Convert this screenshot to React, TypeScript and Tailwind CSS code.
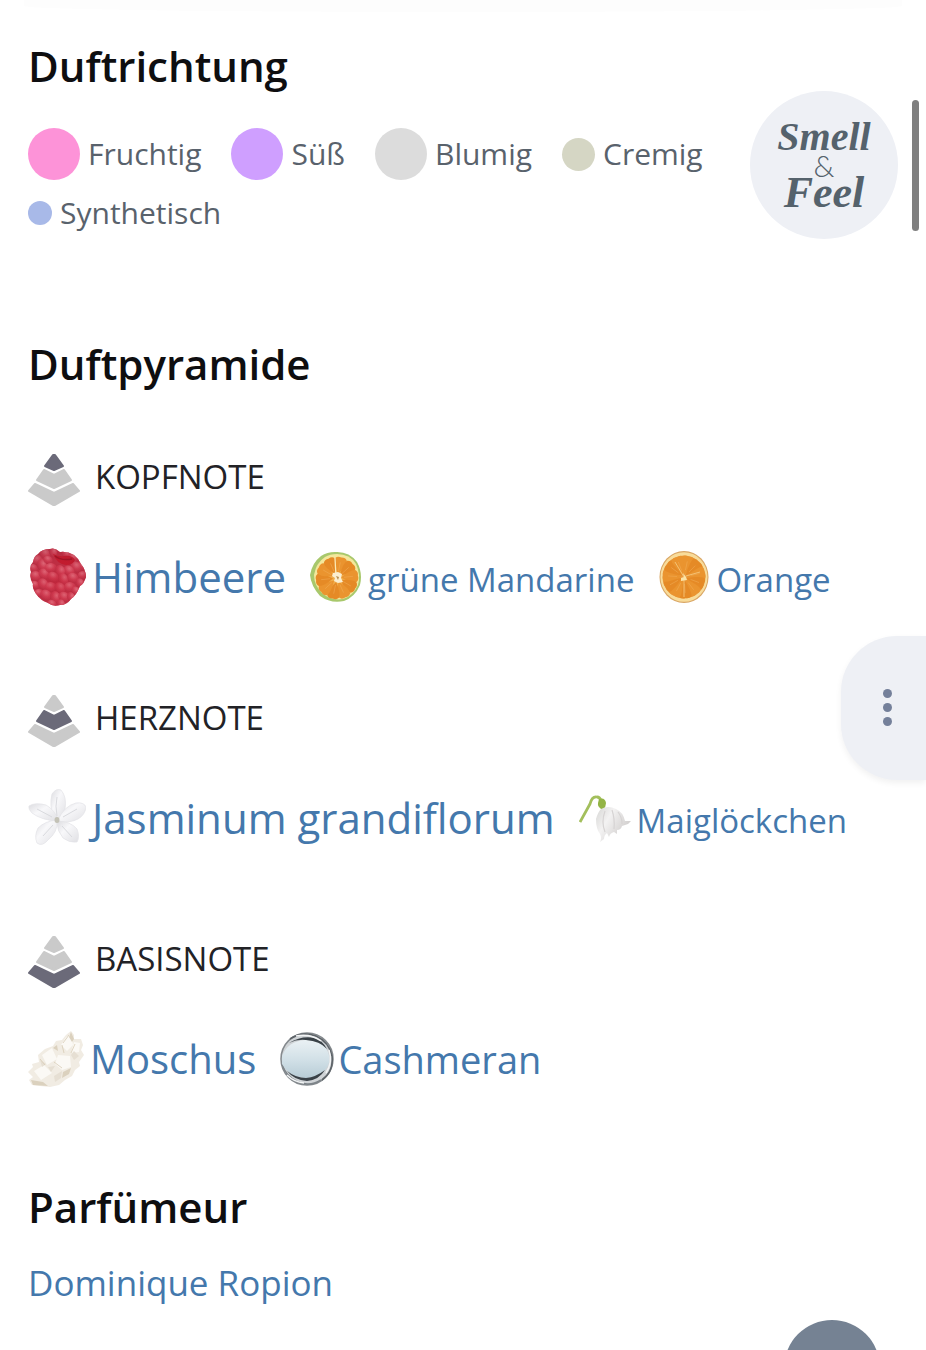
import { useId, type ReactNode } from "react";

const drupelets = [
  [10, 12, 6], [17, 6, 6], [25, 4, 5], [5, 20, 5], [14, 17, 6], [20, 12, 5], [38, 6, 5], [46, 10, 6],
  [53, 18, 5], [8, 28, 6], [16, 26, 6], [23, 20, 6], [48, 19, 6], [55, 27, 5], [41, 23, 6], [32, 23, 6],
  [25, 29, 6], [35, 31, 6], [45, 30, 6], [52, 35, 5], [7, 37, 5], [15, 36, 6], [23, 39, 6], [32, 40, 6],
  [42, 39, 6], [48, 43, 5], [11, 45, 5], [18, 47, 6], [27, 49, 6], [36, 49, 6], [43, 49, 5], [24, 56, 5], [33, 56, 5],
];

function Raspberry() {
  const id = useId();
  return (
    <svg viewBox="0 0 58 58" className="size-[58px] shrink-0" aria-hidden="true">
      <defs>
        <clipPath id={`${id}c`}>
          <path d="M10 6Q14 1 22 1Q27-1 32 4Q39 3 46 7Q51 11 53 16Q58 22 58 29Q56 36 52 38Q48 48 43 51Q39 57 32 57Q25 59 20 55Q12 52 9 47Q4 41 5 36Q1 30 3 24Q1 18 5 14Q6 8 10 6Z" />
        </clipPath>
        <radialGradient id={`${id}g`} cx="0.4" cy="0.3" r="0.75">
          <stop offset="0" stopColor="#ec8391" />
          <stop offset="0.5" stopColor="#d4445a" />
          <stop offset="1" stopColor="#b32b40" />
        </radialGradient>
        <radialGradient id={`${id}h`} cx="0.5" cy="0.6" r="0.6">
          <stop offset="0" stopColor="#c5162b" stopOpacity="0.35" />
          <stop offset="0.6" stopColor="#c5162b" stopOpacity="0.1" />
          <stop offset="1" stopColor="#8f1c30" stopOpacity="0.25" />
        </radialGradient>
      </defs>
      <g clipPath={`url(#${id}c)`}>
        <rect width="58" height="58" fill="#bd3146" />
        {drupelets.map(([x, y, r], i) => (
          <ellipse
            key={i}
            cx={x}
            cy={y}
            rx={r}
            ry={r - 1}
            transform={`rotate(${(i * 37) % 80} ${x} ${y})`}
            fill={`url(#${id}g)`}
            opacity={0.8}
          />
        ))}
        <path d="M25 6Q31 9 36 8Q44 7 47 12Q45 17 38 17Q29 16 25 6Z" fill="#c21c2f" />
        <path d="M27 8Q33 13 44 11" fill="none" stroke="#9c1425" strokeWidth="1.5" />
        <rect width="58" height="58" fill={`url(#${id}h)`} />
      </g>
    </svg>
  );
}

function Citrus({ green = false }: { green?: boolean }) {
  const cx = green ? 27 : 26;
  const cy = green ? 27 : 26;
  const n = green ? 10 : 11;
  return (
    <svg viewBox="0 0 52 52" className="size-[52px] shrink-0" aria-hidden="true">
      {green ? (
        <>
          <path d="M25 1Q39 0 47 11Q53 22 50 34Q45 46 34 50Q21 53 10 45Q1 35 0 24Q2 12 11 5Q17 1 25 1Z" fill="#a8c86c" />
          <path d="M27 3Q40 3 46 13Q51 24 48 34Q43 45 33 48Q21 50 12 42Q4 34 4 24Q6 12 15 6Q20 3 27 3Z" fill="#f3e79b" />
        </>
      ) : (
        <>
          <ellipse cx="26" cy="26" rx="24.500" ry="26" fill="#d9a563" />
          <ellipse cx="26" cy="26" rx="23.500" ry="24.800" fill="#f8dc9a" />
        </>
      )}
      <circle cx={cx} cy={cy} r={green ? 19 : 21.5} fill={green ? "#f0ae4c" : "#e89a42"} />
      {Array.from({ length: n }, (_, i) => (
        <g key={i} transform={`rotate(${(i * 360) / n + 12} ${cx} ${cy})`}>
          <path
            d={
              green
                ? "M27 23Q20 13 21 8Q23 5 27 6Q31 5 33 8Q34 13 27 23Z"
                : "M26 24Q19 10 20 6Q23 4 26 5Q30 4 32 6Q32 11 26 24Z"
            }
            fill={i % 2 ? "#e58a26" : "#ea942f"}
          />
          <path d={`M${cx} ${cy - 7}V${cy - 16}`} stroke="#f2ae58" strokeWidth="0.8" opacity="0.6" />
        </g>
      ))}
      {green ? (
        <>
          <path d="M25 7L26 26" stroke="#fbe9b4" strokeWidth="1.300" />
          <path d="M23 22L28 21L32 23L31 27L33 31L28 32L24 30L25 27L22 25Z" fill="#fbeed0" />
          <path d="M26 25L29 26L28 29Z" fill="#b88d4e" />
        </>
      ) : (
        <>
          <path d="M26 28V46M26 26L17 11M28 25L42 21" stroke="#f5c67c" strokeWidth="0.900" fill="none" />
          <path d="M25 22L28 26L29 29L23 30L23 27L26 26Z" fill="#fbe3a6" />
        </>
      )}
    </svg>
  );
}

function Jasmine() {
  const id = useId();
  return (
    <svg viewBox="0 0 58 58" className="size-[58px] shrink-0" aria-hidden="true">
      <defs>
        <linearGradient id={id} x1="0" y1="0" x2="1" y2="1">
          <stop offset="0" stopColor="#dcdce0" />
          <stop offset="0.4" stopColor="#f8f8fa" />
          <stop offset="1" stopColor="#e0e0e4" />
        </linearGradient>
      </defs>
      <g fill={`url(#${id})`} stroke="#e2e2e6" strokeWidth="0.7">
        <path d="M26 31Q21 16 24 5Q28-1 33 1Q39 8 37 20Q34 28 31 31Z" />
        <path d="M30 31Q36 17 48 14Q56 13 58 18Q57 26 50 30Q42 34 30 33Z" />
        <path d="M29 32Q13 31 4 24Q0 20 1 17Q7 13 18 16Q27 21 30 31Z" />
        <path d="M29 32Q30 43 20 51Q14 58 9 54Q6 47 10 39Q17 32 29 31Z" />
        <path d="M29 32Q42 32 49 40Q52 48 49 53Q41 54 35 49Q29 42 29 33Z" />
      </g>
      <path d="M29 27Q27 17 29 8M35 28L49 20M24 28L9 20M25 36L15 47M34 37L44 48" stroke="#d9dade" strokeWidth="1" fill="none" />
      <ellipse cx="29" cy="31" rx="2.500" ry="3" fill="#c3c2b6" />
    </svg>
  );
}

function LilyOfTheValley() {
  const id = useId();
  return (
    <svg viewBox="0 0 52 52" className="size-[52px] shrink-0" aria-hidden="true">
      <defs>
        <linearGradient id={id} x1="0" y1="0" x2="1" y2="0.6">
          <stop offset="0" stopColor="#d6d6d4" />
          <stop offset="0.4" stopColor="#f3f2f2" />
          <stop offset="1" stopColor="#cdcac9" />
        </linearGradient>
      </defs>
      <path d="M1 30Q6 21 11 12Q13 4 18 5Q21 5 22 9" fill="none" stroke="#a3bf5c" strokeWidth="2.800" />
      <path d="M20 7Q26 5 27 11Q27 15 24 18Q18 15 19 11Z" fill="#93b445" />
      <path d="M22 17Q29 13 37 17Q44 20 46 29L52 29L49 32L43 34Q42 38 38 38L38 42L35 40Q31 41 30 45L28 41Q25 43 25 47L21 50Q23 46 21 42Q17 37 17 27Q19 20 22 17Z" fill={`url(#${id})`} />
      <path d="M26 19Q22 30 26 40M33 18Q36 27 35 37M39 20Q43 25 43 32" stroke="#d6d3d3" strokeWidth="1.200" fill="none" />
    </svg>
  );
}

function Musk() {
  return (
    <svg viewBox="0 0 56 56" className="size-14 shrink-0" aria-hidden="true">
      <path d="M43 0L46 4L46 8L53 8L55 14L53 19L56 24L51 31L52 35L47 39L44 45L37 49L31 54L22 56L12 55L4 54L1 49L5 46L0 41L5 36L4 33L11 31L10 24L17 18L25 15L28 10L34 9L38 4Z" fill="#f1ece3" />
      <path d="M38 6L43 3L45 14L39 20L33 14ZM14 24L24 17L29 28L19 34ZM46 11L52 12L51 21L43 22ZM6 40L16 34L24 42L13 49ZM30 24L42 25L43 36L34 39L27 33Z" fill="#fbf9f5" />
      <path d="M43 1L46 8L44 11L41 6ZM25 17L29 14L30 20ZM35 41L43 37L41 43L34 47ZM3 49L15 51L20 55L5 54Z" fill="#dbd1be" />
      <path d="M46 20L51 25L46 29L43 24ZM26 45L34 40L33 47L27 51ZM12 29L18 33L14 36ZM20 36L27 35L23 41Z" fill="#e6dfd3" />
      <path d="M41 4L35 12M34 14L36 22M47 13L43 22M12 28L17 34M26 31L34 37" fill="none" stroke="#d8ccb5" strokeWidth="0.800" />
    </svg>
  );
}

function Droplet() {
  const id = useId();
  return (
    <svg viewBox="0 0 54 54" className="size-[54px] shrink-0" aria-hidden="true">
      <defs>
        <linearGradient id={id} x1="0" y1="0" x2="0" y2="1">
          <stop offset="0" stopColor="#eaf1f4" />
          <stop offset="0.55" stopColor="#d0dfe6" />
          <stop offset="1" stopColor="#b7ccd6" />
        </linearGradient>
      </defs>
      <circle cx="27" cy="27" r="26" fill="#cfd3d6" stroke="#858a8e" strokeWidth="1.500" />
      <path d="M10 7Q22-1 36 4Q49 10 52 24Q54 39 42 48" fill="none" stroke="#5d6368" strokeWidth="1.600" />
      <path d="M2 32Q6 45 18 50Q30 55 41 48" fill="none" stroke="#7d8489" strokeWidth="1.600" />
      <path d="M2 24Q8 9 25 8Q42 8 48 20Q52 30 45 38Q36 47 24 46Q8 44 2 32Z" fill={`url(#${id})`} />
      <path d="M9 11Q22 3 35 6Q43 9 47 17Q40 9 26 8Q17 7 9 11Z" fill="#394147" />
      <path d="M7 39Q16 46 26 46Q36 45 45 38Q39 48 27 49Q14 48 7 39Z" fill="#394147" />
      <path d="M16 4Q30 1 41 9M49 18Q53 30 46 41M7 43Q14 50 24 51" fill="none" stroke="#f3f5f6" strokeWidth="1.500" />
    </svg>
  );
}

function Pyramid({ active }: { active: number }) {
  const layers = [
    "M25 1H27L35 12L26 16L17 12Z",
    "M16 16L26 21L36 16L43 26L26 34L9 26Z",
    "M7 30L26 39L45 30L51 37L27 51H25L1 37Z",
  ];
  return (
    <svg viewBox="0 0 52 52" className="size-[52px] shrink-0" aria-hidden="true">
      {layers.map((d, i) => (
        <path
          key={d}
          d={d}
          fill={i === active ? "#6b6a79" : "#cacaca"}
          stroke={i === active ? "#6b6a79" : "#cacaca"}
          strokeWidth="2"
          strokeLinejoin="round"
        />
      ))}
    </svg>
  );
}

const accords = [
  { name: "Fruchtig", dot: "size-[52px] bg-[#fd93d8]" },
  { name: "Süß", dot: "size-[52px] bg-[#cf9fff]" },
  { name: "Blumig", dot: "size-[52px] bg-[#dcdcdc]" },
  { name: "Cremig", dot: "size-[33px] bg-[#d5d6c4]" },
  { name: "Synthetisch", dot: "size-6 bg-[#a8b9e8]" },
];

type Note = { name: string; icon: ReactNode; size: string };

const large = "gap-1.5 text-[42px] leading-[58px]";
const small = "gap-1.5 text-[33px] leading-[52px] *:last:pt-1.5";

const levels: { title: string; notes: Note[] }[] = [
  {
    title: "Kopfnote",
    notes: [
      { name: "Himbeere", icon: <Raspberry />, size: large },
      { name: "grüne Mandarine", icon: <Citrus green />, size: small },
      { name: "Orange", icon: <Citrus />, size: small },
    ],
  },
  {
    title: "Herznote",
    notes: [
      { name: "Jasminum grandiflorum", icon: <Jasmine />, size: large },
      { name: "Maiglöckchen", icon: <LilyOfTheValley />, size: small },
    ],
  },
  {
    title: "Basisnote",
    notes: [
      { name: "Moschus", icon: <Musk />, size: "gap-1.5 text-[40px] leading-[58px]" },
      { name: "Cashmeran", icon: <Droplet />, size: "gap-1 text-[38px] leading-[58px]" },
    ],
  },
];

const heading = "text-[42px] leading-[50px] font-semibold text-[#0e0e10]";

export default function App() {
  return (
    <div className="min-h-screen overflow-x-hidden bg-white font-['Open_Sans','Noto_Sans',sans-serif]">
      <div className="mx-6 h-3 rounded-b-[50%] bg-[#fdfdfd]" />
      <main className="px-7 pt-[29px] pb-6">
        <section>
          <h2 className={heading}>Duftrichtung</h2>
          <div className="flex items-start justify-between">
            <ul className="flex flex-1 flex-wrap gap-x-[30px] gap-y-3 pt-[37px] text-[30px] leading-[42px] text-[#59626c]">
              {accords.map((a) => (
                <li key={a.name} className="flex items-center gap-2">
                  <span className={`shrink-0 rounded-full ${a.dot}`} />
                  {a.name}
                </li>
              ))}
            </ul>
            <a
              href="#smell-and-feel"
              className="flex size-[148px] shrink-0 flex-col items-center justify-center rounded-full bg-[#eef0f5] font-['Liberation_Serif',serif] text-[40px] leading-8 font-bold text-[#55626c] italic"
            >
              <span>Smell</span>
              <span className="font-['Lato',sans-serif] text-[30px] leading-6 font-light not-italic">&amp;</span>
              <span className="text-[44px]">Feel</span>
            </a>
          </div>
        </section>

        <section className="mt-[100px]">
          <h2 className={heading}>Duftpyramide</h2>
          <div className="mt-[65px] flex flex-col gap-[89px]">
            {levels.map((level, i) => (
              <div key={level.title} className="flex flex-col gap-[42px]">
                <h3 className="flex gap-[15px] text-[33px] leading-[46px] text-[#222226] uppercase">
                  <Pyramid active={i} />
                  {level.title}
                </h3>
                <ul className="flex min-h-[58px] flex-wrap items-center gap-x-6 gap-y-4">
                  {level.notes.map((n) => (
                    <li key={n.name}>
                      <a href={`#${n.name}`} className={`flex items-center text-[#4478ac] ${n.size}`}>
                        {n.icon}
                        <span>{n.name}</span>
                      </a>
                    </li>
                  ))}
                </ul>
              </div>
            ))}
          </div>
        </section>

        <section className="mt-[94px]">
          <h2 className={heading}>Parfümeur</h2>
          <a href="#dominique-ropion" className="mt-[26px] inline-block text-[35px] leading-[50px] text-[#4478ac]">
            Dominique Ropion
          </a>
        </section>
      </main>

      <div className="fixed top-[100px] right-[7px] h-[131px] w-[7px] rounded-full bg-[#7f7f7f]" />
      <button
        type="button"
        aria-label="Menü"
        className="fixed top-[636px] right-0 flex h-36 w-[85px] flex-col items-center justify-center gap-[5px] rounded-l-[56px] bg-[#eef0f5] pb-0.5 pl-2 shadow-[0_3px_6px_rgba(0,0,0,0.06)]"
      >
        <span className="size-[9px] rounded-full bg-[#74809a]" />
        <span className="size-[9px] rounded-full bg-[#74809a]" />
        <span className="size-[9px] rounded-full bg-[#74809a]" />
      </button>
      <button
        type="button"
        aria-label="Nach oben"
        className="fixed right-[46px] -bottom-[66px] size-24 rounded-full bg-[#758293]"
      />
    </div>
  );
}
